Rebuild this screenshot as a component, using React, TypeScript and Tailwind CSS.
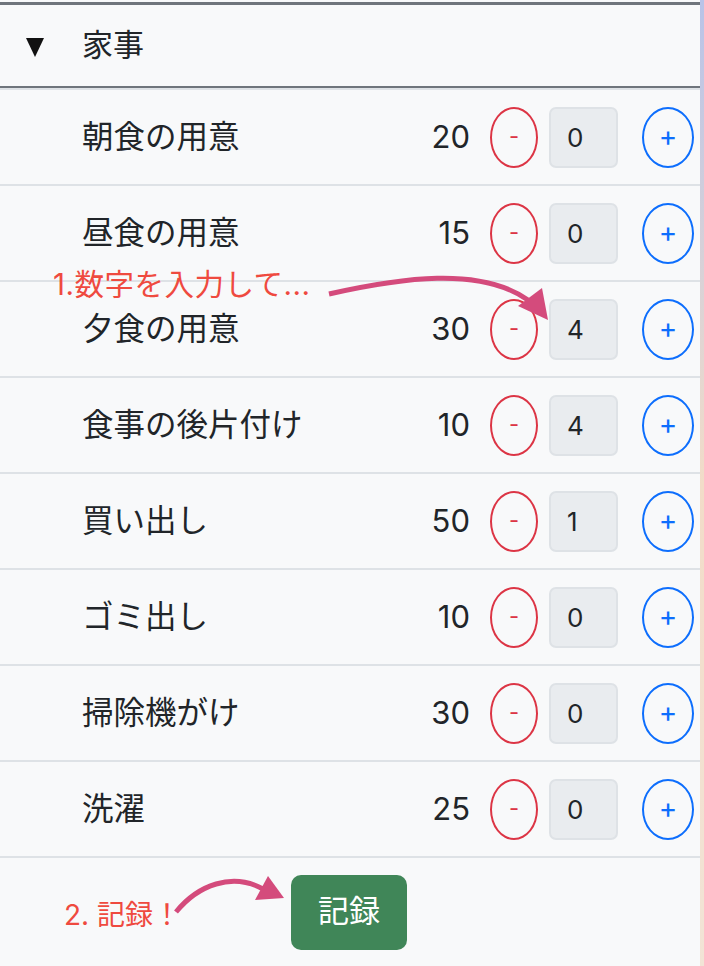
import React from "react";

type Chore = { name: string; points: number; count: number };

const chores: Chore[] = [
  { name: "朝食の用意", points: 20, count: 0 },
  { name: "昼食の用意", points: 15, count: 0 },
  { name: "夕食の用意", points: 30, count: 4 },
  { name: "食事の後片付け", points: 10, count: 4 },
  { name: "買い出し", points: 50, count: 1 },
  { name: "ゴミ出し", points: 10, count: 0 },
  { name: "掃除機がけ", points: 30, count: 0 },
  { name: "洗濯", points: 25, count: 0 },
];

const font = "font-['Inter','Noto_Sans_CJK_JP',sans-serif]";

function ChoreRow({ chore }: { chore: Chore }) {
  return (
    <div className="flex h-[96px] items-center border-t-2 border-[#dee2e6]">
      <div className="flex-1 pl-[82px] text-[31.5px] text-[#212529]">{chore.name}</div>
      <div className="text-[31px] text-[#212529]">{chore.points}</div>
      <button className="ml-[20px] flex h-[61px] w-[48px] items-center justify-center rounded-[50%] border-2 border-[#dc3545] pb-[2px] text-[22px] text-[#dc3545]">
        -
      </button>
      <div className="ml-[11px] flex h-[61px] w-[69px] items-center rounded-[7px] border-2 border-[#dee2e6] bg-[#e9ecef] pl-[16px] text-[26px] text-[#212529]">
        {chore.count}
      </div>
      <button className="ml-[24px] mr-[6px] flex h-[61px] w-[52px] items-center justify-center rounded-[50%] border-2 border-[#0d6efd] pb-[2px] text-[28px] text-[#0d6efd]">
        +
      </button>
    </div>
  );
}

export default function App() {
  return (
    <div className={`flex h-[966px] w-[704px] overflow-hidden ${font}`}>
      <div className="relative flex w-[700px] flex-col bg-[#f8f9fa]">
        <div className="h-[2px]" />
        <div className="flex h-[86px] items-center border-t-[3px] border-b-2 border-[#6f757c] pl-[25px]">
          <svg width="20" height="20" viewBox="0 0 20 20" className="mt-[3px]">
            <polygon points="1,1 19,1 10,20" fill="#111" />
          </svg>
          <span className="ml-[37px] text-[31px] text-[#212529]">家事</span>
        </div>

        {chores.map((c) => (
          <ChoreRow key={c.name} chore={c} />
        ))}

        <div className="flex flex-1 items-center border-t-2 border-[#dee2e6] pl-[64px]">
          <span className="w-[118px] whitespace-nowrap pt-[6px] text-[28px] text-[#ef4a3f]">2. 記録！</span>
          <div className="ml-[109px] flex h-[75px] w-[116px] items-center justify-center rounded-[10px] bg-[#408658] pb-[2px] text-[31px] text-white">
            記録
          </div>
        </div>

        <span className="absolute left-[53px] top-[262px] text-[29.5px] tracking-[0.5px] text-[#ef4a3f]">
          1.数字を入力して...
        </span>

        <svg className="pointer-events-none absolute inset-0" width="700" height="966">
          <path d="M 329 294 C 400 278, 480 266, 528 300" stroke="#d44b7c" strokeWidth="5" fill="none" />
          <polygon points="518,306 542,288 548,320" fill="#d44b7c" />
          <path d="M 176 912 C 198 885, 232 872, 263 889" stroke="#d44b7c" strokeWidth="5" fill="none" />
          <polygon points="268,876 284,898 255,900" fill="#d44b7c" />
        </svg>
      </div>
      <div className="w-[4px] bg-linear-to-b from-[#b9c3e8] via-[#f2dcc8] to-[#f2e4d6]" />
    </div>
  );
}
